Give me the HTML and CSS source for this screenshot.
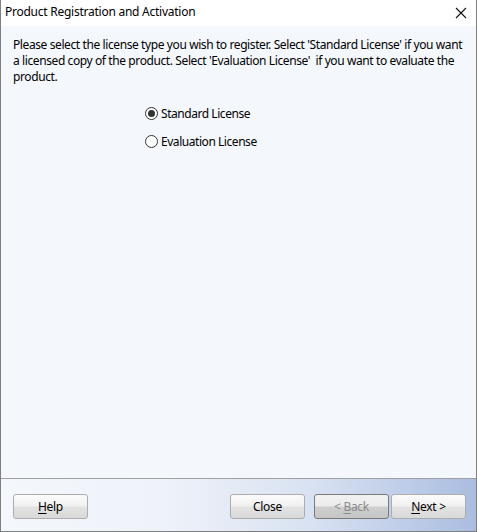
FILE: index.html
```html
<!DOCTYPE html>
<html>
<head>
<meta charset="utf-8">
<link rel="stylesheet" href="styles.css">
</head>
<body>
<div class="window">
  <div class="titlebar">
    <span class="title">Product Registration and Activation</span>
    <svg class="close-x" width="12" height="12" viewBox="0 0 12 12"><path d="M1 1 L11 11 M11 1 L1 11" stroke="#111" stroke-width="1.1" fill="none"/></svg>
  </div>
  <div class="content">
    <p class="intro">Please select the license type you wish to register. Select 'Standard License' if you want<br>a licensed copy of the product. Select 'Evaluation License'&nbsp; if you want to evaluate the<br>product.</p>
    <div class="options">
      <label class="option"><span class="radio checked"></span>Standard License</label>
      <label class="option"><span class="radio"></span>Evaluation License</label>
    </div>
  </div>
  <div class="footer">
    <button class="btn"><u>H</u>elp</button>
    <div class="spacer"></div>
    <button class="btn">Close</button>
    <button class="btn disabled">&lt; <u>B</u>ack</button>
    <button class="btn next"><u>N</u>ext &gt;</button>
  </div>
</div>
</body>
</html>
```
FILE: styles.css
```css
html, body {
  margin: 0;
  padding: 0;
  background: #ffffff;
}
.window {
  width: 477px;
  height: 532px;
  box-sizing: border-box;
  border-left: 1px solid #7f7f7f;
  border-right: 1px solid #7f7f7f;
  border-bottom: 1px solid #7f7f7f;
  display: flex;
  flex-direction: column;
  font-family: "Noto Sans", "DejaVu Sans", sans-serif;
  font-size: 12px;
  color: #000;
}
.titlebar {
  height: 26px;
  background: #ffffff;
  display: flex;
  align-items: center;
  padding-left: 4px;
  padding-right: 9px;
  flex-shrink: 0;
}
.title {
  flex: 1;
  font-size: 12px;
  letter-spacing: -0.25px;
  position: relative;
  top: -2px;
}
.close-x {
  position: relative;
  top: 0px;
}
.content {
  flex: 1;
  background: #f4f7fc;
  padding: 11px 4px 0 12px;
}
.intro {
  margin: 0;
  line-height: 16px;
  letter-spacing: -0.4px;
  white-space: nowrap;
}
.options {
  display: flex;
  flex-direction: column;
  gap: 8px;
  margin-top: 18px;
  padding-left: 132px;
}
.option {
  display: flex;
  align-items: center;
  height: 20px;
  gap: 3px;
  letter-spacing: -0.45px;
}
.radio {
  width: 11px;
  height: 11px;
  border: 1px solid #333;
  border-radius: 50%;
  background: #fff;
  box-sizing: content-box;
  display: flex;
  align-items: center;
  justify-content: center;
}
.radio.checked::after {
  content: "";
  width: 7px;
  height: 7px;
  border-radius: 50%;
  background: #333;
}
.footer {
  height: 53px;
  flex-shrink: 0;
  border-top: 1px solid #a0a0a0;
  background: linear-gradient(to right, #f4f7fc 0%, #eef2f9 35%, #d9e2f2 65%, #aabde0 100%);
  display: flex;
  align-items: flex-start;
  padding: 15px 10px 0 12px;
  box-sizing: border-box;
}
.spacer {
  flex: 1;
}
.btn {
  width: 75px;
  height: 25px;
  box-sizing: border-box;
  border: 1px solid #adadad;
  border-radius: 3px;
  background: linear-gradient(to bottom, #fbfbfb 0%, #f2f2f2 45%, #e2e2e2 55%, #d9d9d9 100%);
  font-family: "Noto Sans", "DejaVu Sans", sans-serif;
  font-size: 12px;
  color: #000;
  padding: 0;
  letter-spacing: -0.3px;
}
.btn u {
  text-decoration: underline;
  text-underline-offset: 2px;
}
.btn.disabled {
  margin-left: 9px;
  border-color: #7a7a7a;
  color: #8a8a8a;
  background: linear-gradient(to bottom, #f2f2f2 0%, #ebebeb 48%, #cfcfcf 52%, #c6c6c6 100%);
}
.btn.next {
  margin-left: 2px;
}
```
